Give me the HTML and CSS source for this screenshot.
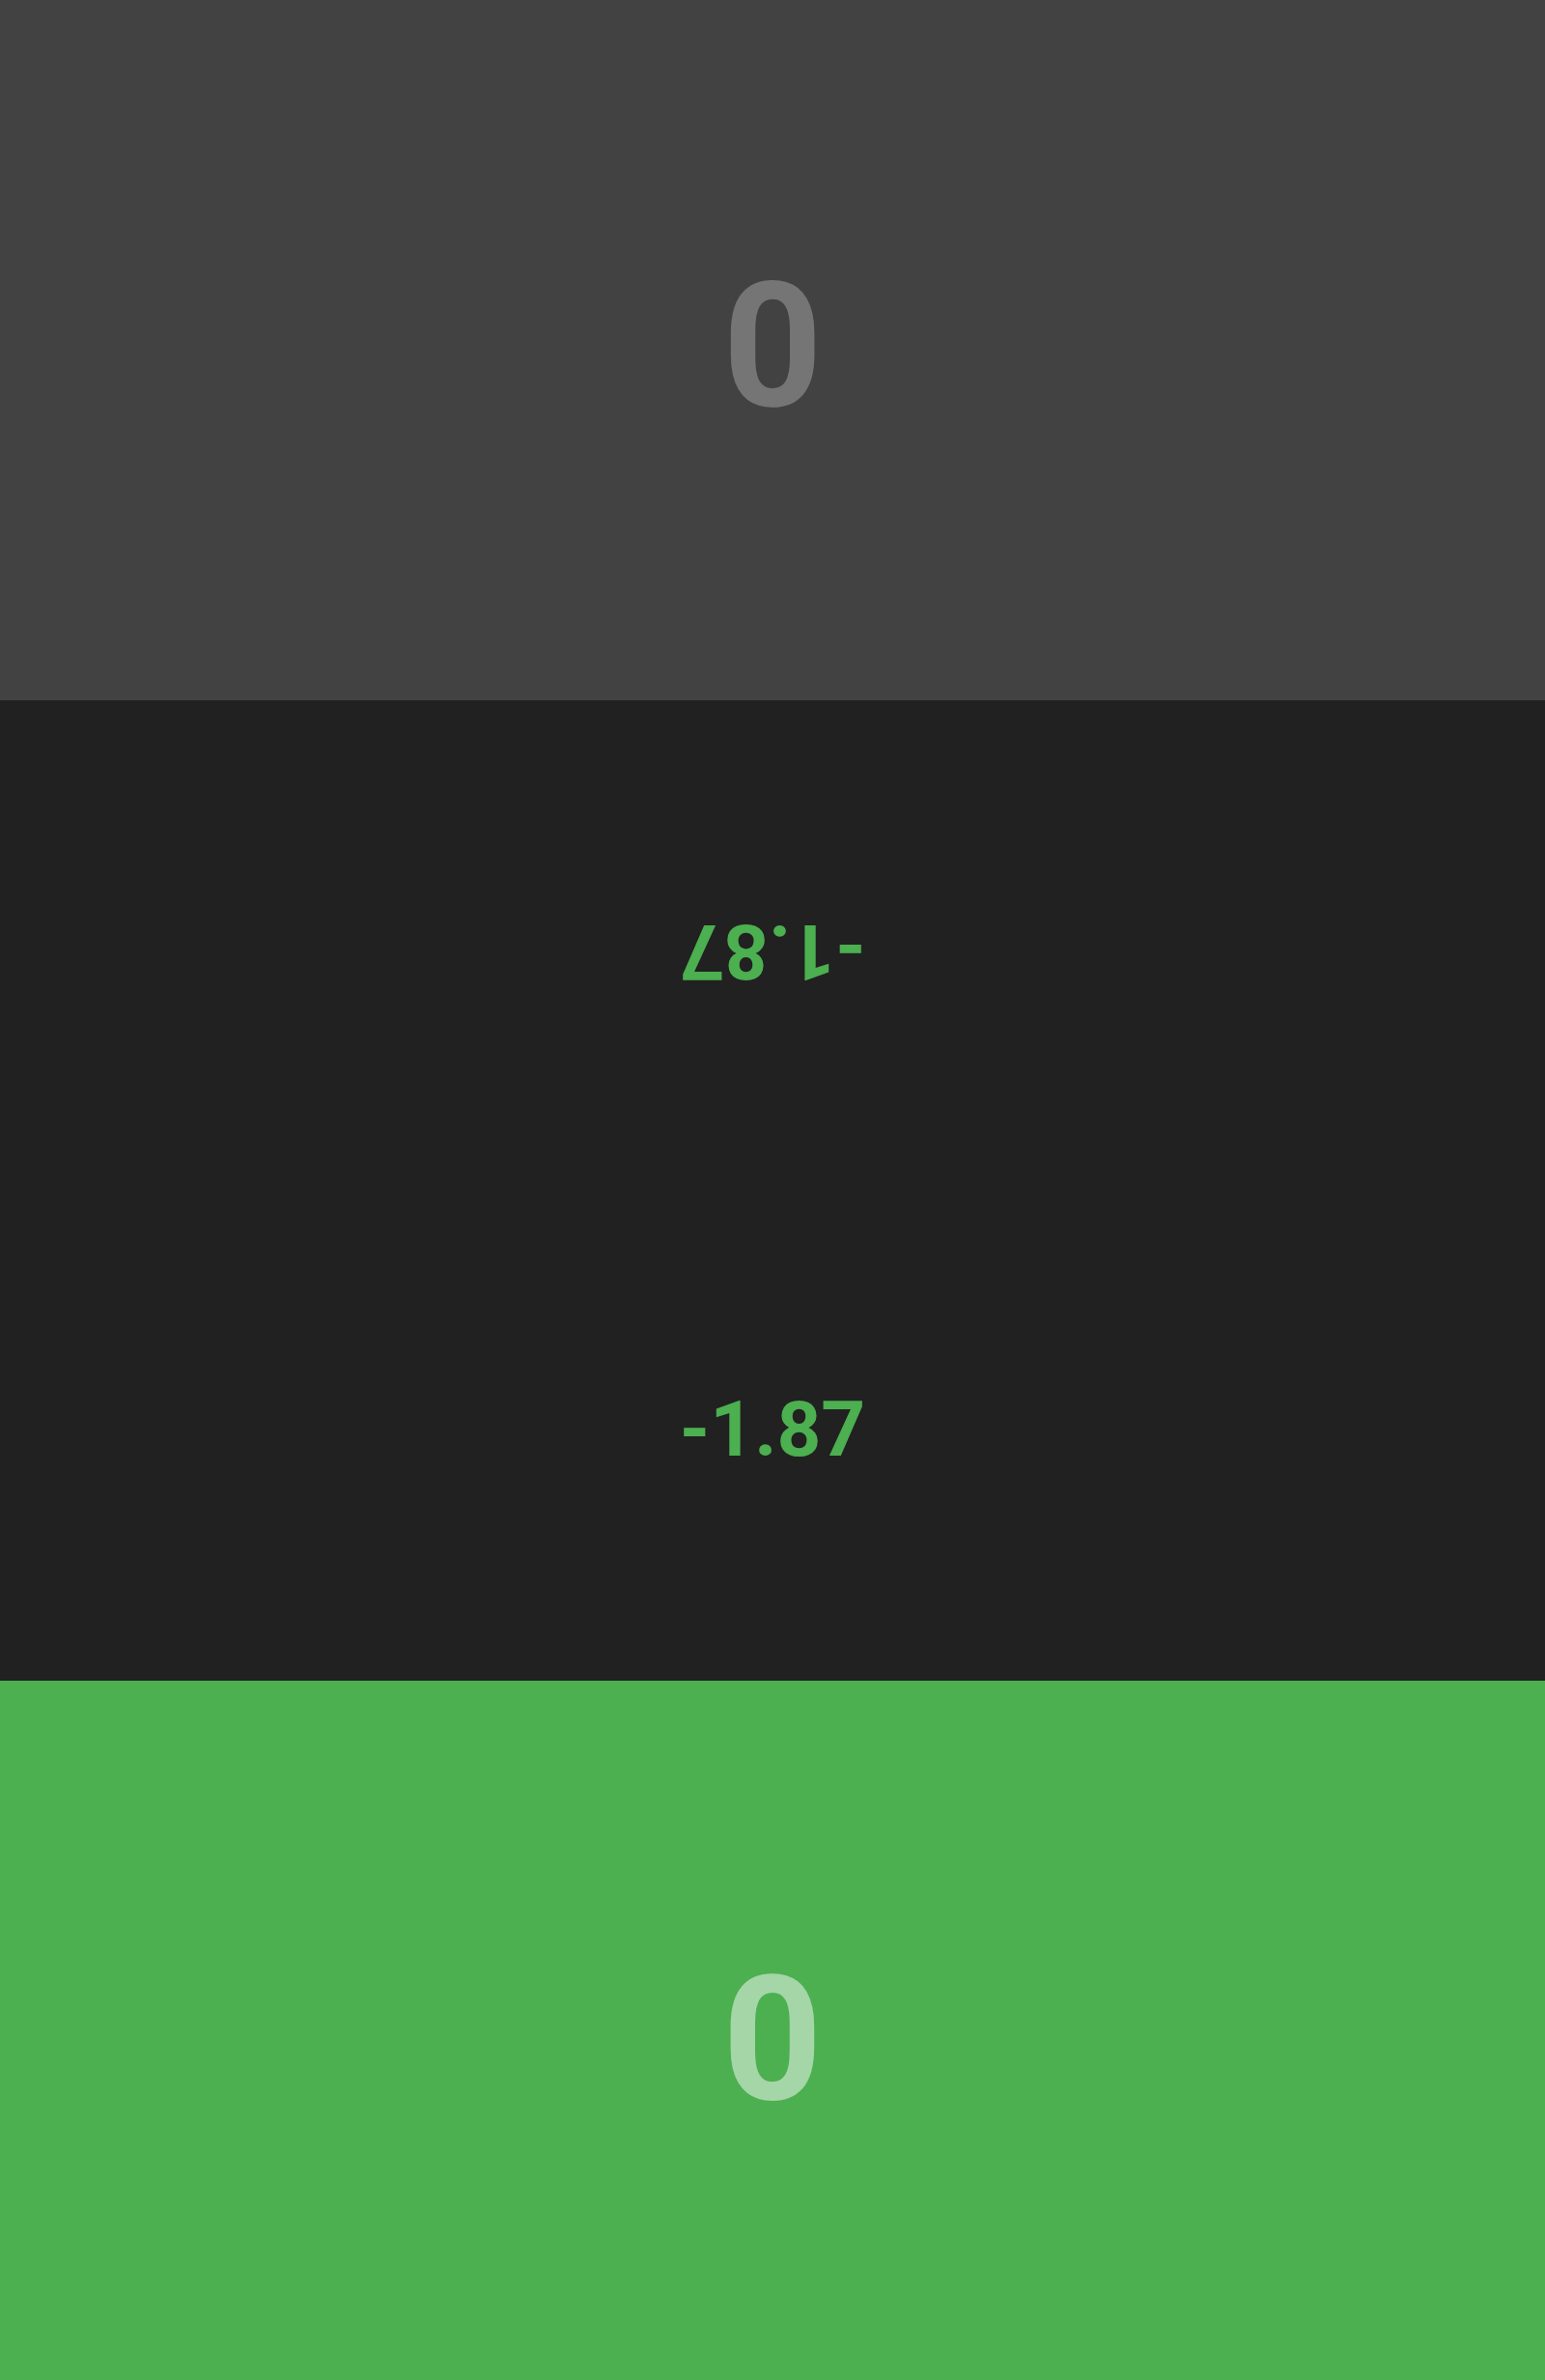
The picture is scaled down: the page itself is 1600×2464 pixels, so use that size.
FILE: index.html
```html
<!DOCTYPE html>
<html>
<head>
<meta charset="utf-8">
<link rel="stylesheet" href="styles.css">
</head>
<body>
<div class="app">
  <section class="player player-top flipped">
    <span class="score">0</span>
  </section>
  <section class="diff">
    <div class="diff-half flipped"><span class="diff-value">-1.87</span></div>
    <div class="diff-half"><span class="diff-value">-1.87</span></div>
  </section>
  <section class="player player-bottom">
    <span class="score">0</span>
  </section>
</div>
</body>
</html>
```
FILE: styles.css
```css
html, body {
  margin: 0;
  padding: 0;
}
body {
  font-family: Roboto, "Liberation Sans", sans-serif;
}
.app {
  display: flex;
  flex-direction: column;
  width: 1600px;
  height: 2464px;
}
.flipped {
  transform: rotate(180deg);
}
.player {
  height: 725px;
  display: flex;
  align-items: center;
  justify-content: center;
}
.player-top {
  background: #424242;
  color: #757575;
}
.player-bottom {
  height: 724px;
  background: #4caf50;
  color: #a5d6a7;
}
.score {
  font-size: 180px;
  font-weight: 700;
  line-height: 1;
  margin-top: 19px;
}
.diff {
  height: 1015px;
  background: #212121;
  display: flex;
  flex-direction: column;
}
.diff-half {
  flex: 1;
  display: flex;
  align-items: center;
  justify-content: center;
}
.diff-value {
  color: #4caf50;
  font-size: 80px;
  font-weight: 700;
  line-height: 1;
  margin-bottom: 12px;
}
```
